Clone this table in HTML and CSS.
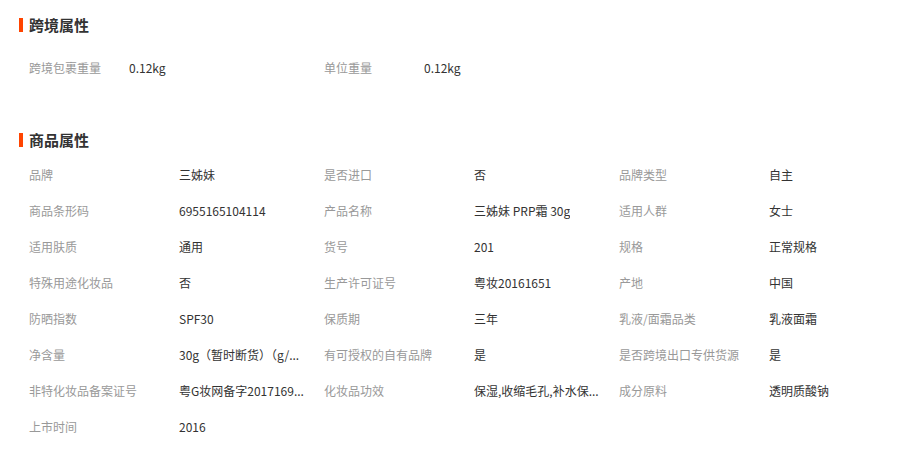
FILE: index.html
```html
<!DOCTYPE html>
<html lang="zh-CN">
<head>
<meta charset="utf-8">
<title>属性</title>
<link rel="stylesheet" href="styles.css">
</head>
<body>
<div class="section-title first"><span class="bar"></span><span>跨境属性</span></div>
<div class="rows rows-cross">
  <div class="cell"><span class="label">跨境包裹重量</span><span class="value">0.12kg</span></div>
  <div class="cell"><span class="label">单位重量</span><span class="value">0.12kg</span></div>
</div>

<div class="section-title second"><span class="bar"></span><span>商品属性</span></div>
<div class="rows rows-goods">
  <div class="cell"><span class="label">品牌</span><span class="value">三姊妹</span></div>
  <div class="cell"><span class="label">是否进口</span><span class="value">否</span></div>
  <div class="cell"><span class="label">品牌类型</span><span class="value">自主</span></div>

  <div class="cell"><span class="label">商品条形码</span><span class="value">6955165104114</span></div>
  <div class="cell"><span class="label">产品名称</span><span class="value">三姊妹 PRP霜 30g</span></div>
  <div class="cell"><span class="label">适用人群</span><span class="value">女士</span></div>

  <div class="cell"><span class="label">适用肤质</span><span class="value">通用</span></div>
  <div class="cell"><span class="label">货号</span><span class="value">201</span></div>
  <div class="cell"><span class="label">规格</span><span class="value">正常规格</span></div>

  <div class="cell"><span class="label">特殊用途化妆品</span><span class="value">否</span></div>
  <div class="cell"><span class="label">生产许可证号</span><span class="value">粤妆20161651</span></div>
  <div class="cell"><span class="label">产地</span><span class="value">中国</span></div>

  <div class="cell"><span class="label">防晒指数</span><span class="value">SPF30</span></div>
  <div class="cell"><span class="label">保质期</span><span class="value">三年</span></div>
  <div class="cell"><span class="label">乳液/面霜品类</span><span class="value">乳液面霜</span></div>

  <div class="cell"><span class="label">净含量</span><span class="value">30g（暂时断货）（g/...</span></div>
  <div class="cell"><span class="label">有可授权的自有品牌</span><span class="value">是</span></div>
  <div class="cell"><span class="label">是否跨境出口专供货源</span><span class="value">是</span></div>

  <div class="cell"><span class="label">非特化妆品备案证号</span><span class="value">粤G妆网备字2017169...</span></div>
  <div class="cell"><span class="label">化妆品功效</span><span class="value">保湿,收缩毛孔,补水保...</span></div>
  <div class="cell"><span class="label">成分原料</span><span class="value">透明质酸钠</span></div>

  <div class="cell"><span class="label">上市时间</span><span class="value">2016</span></div>
</div>
</body>
</html>
```

FILE: styles.css
```css
* {
  box-sizing: border-box;
}

body {
  margin: 0;
  background: #fff;
  font-family: "Noto Sans CJK SC", "Microsoft YaHei", sans-serif;
  font-size: 12px;
  color: #333;
}

.section-title {
  display: flex;
  align-items: center;
  gap: 6px;
  height: 20px;
  margin-left: 19px;
  font-size: 15px;
  font-weight: bold;
  color: #333;
  line-height: 20px;
}

.section-title.first {
  margin-top: 15px;
}

.section-title.second {
  margin-top: 44px;
}

.bar {
  width: 4px;
  height: 14px;
  background: #ff4400;
}

.rows {
  display: grid;
  grid-template-columns: 295px 295px 295px;
  padding-left: 29px;
}

.rows-cross {
  padding-top: 15px;
}

.rows-goods {
  padding-top: 7px;
}

.cell {
  display: flex;
  height: 36px;
  line-height: 36px;
  white-space: nowrap;
}

.label {
  flex: 0 0 150px;
  color: #999;
}

.rows-cross .label {
  flex-basis: 100px;
}

.value {
  max-width: 140px;
  overflow: hidden;
  text-overflow: ellipsis;
  color: #333;
}
```
